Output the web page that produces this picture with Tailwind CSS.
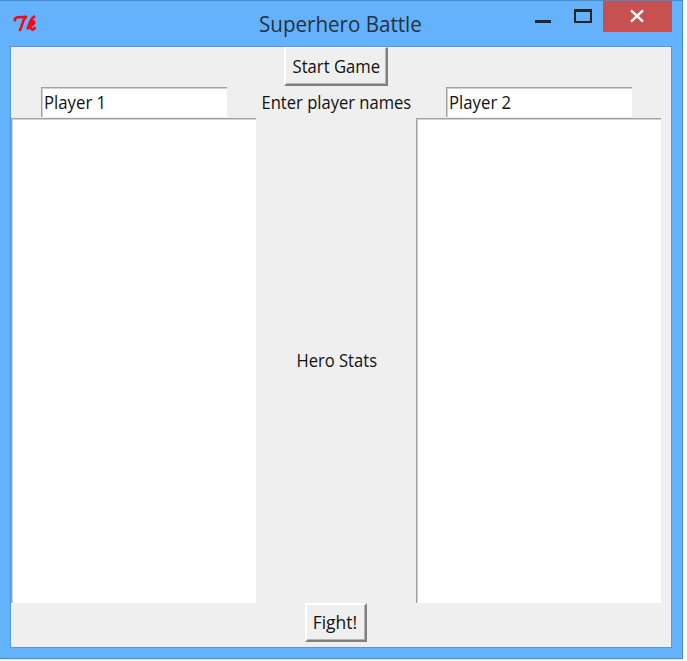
<!DOCTYPE html>
<html lang="en">
<head>
<meta charset="utf-8">
<title>Superhero Battle</title>
<script src="https://cdn.jsdelivr.net/npm/@tailwindcss/browser@4"></script>
</head>
<body class="w-[687px] h-[661px] overflow-hidden bg-white">
<div class="w-[683px] h-[659px] bg-[#64b1fc] border-t border-r border-b border-[#4a8aca] pl-[10px] shadow-[0_1px_2px_#e4e8e8] font-['Open_Sans','Noto_Sans',sans-serif] text-[18px] text-[#111]">
  <header class="flex h-[45px] w-[662px] items-start">
    <svg class="mt-[13px] ml-[3px] h-[20px] w-[24px] shrink-0" viewBox="0 0 24 20" fill="none" stroke="#fa0514" stroke-linejoin="round">
      <path d="M1.8 7.4L2 4.8L4 3.2H7L13 2.8L10.4 6.5L9 11L6.6 17" stroke-width="2.5"/>
      <path d="M22 2L19 4.6L17 8.2L14.4 15.4M15.8 11L18 8.4L20.8 7.4L21.2 9.2L19 11L16.7 11.6L18 14.4L19.6 15.6L21.4 14.8L21.8 12.8" stroke-width="2.6"/>
    </svg>
    <h1 class="mt-[6px] ml-[222px] w-[182px] shrink-0 whitespace-nowrap text-[22px] leading-[32px] font-normal text-[#26323e]"><span class="inline-block origin-left scale-x-[0.935]">Superhero Battle</span></h1>
    <div class="ml-auto flex">
      <svg class="h-[31px] w-[80px]" viewBox="0 0 80 31" shape-rendering="crispEdges"><path d="M12 19h16v3H12z" fill="#262626"/><path fill-rule="evenodd" d="M51 8h18v14H51zM53 11v9h14v-9z" fill="#262626"/></svg>
      <div class="flex h-[31px] w-[69px] bg-[#c75050]"><svg class="mt-[8px] ml-[27px] h-[14px] w-[14px]" viewBox="0 0 14 14" fill="none" stroke="#fff" stroke-width="2.4"><path d="M1 1.3 13 12.7M13 1.3 1 12.7"/></svg></div>
    </div>
  </header>
  <main class="grid h-[602px] w-[662px] grid-cols-[245px_160px_245px] grid-rows-[40px_31px_485px_40px] justify-start border border-[#5298dc] bg-[#efefef] whitespace-nowrap">
    <button class="col-start-2 row-start-1 ml-[28px] flex h-[39px] w-[104px] items-center justify-center border-t border-l-2 border-r-2 border-b-2 border-t-white border-l-white border-r-[#808080] border-b-[#808080] shadow-[inset_-1px_-1px_0_#b4b4b4]"><span class="inline-block scale-x-[0.925]">Start Game</span></button>
    <div class="col-start-1 row-start-2 ml-[30px] flex h-[30px] w-[186px] items-center border-t border-l border-[#a0a0a0] bg-white pl-[2px] shadow-[inset_1px_1px_0_#d2d2d2]"><span class="inline-block origin-left scale-x-[0.93]">Player 1</span></div>
    <div class="col-start-2 row-start-2 flex items-center justify-center"><span class="inline-block scale-x-[0.92]">Enter player names</span></div>
    <div class="col-start-3 row-start-2 ml-[30px] flex h-[30px] w-[186px] items-center border-t border-l border-[#a0a0a0] bg-white pl-[2px] shadow-[inset_1px_1px_0_#d2d2d2]"><span class="inline-block origin-left scale-x-[0.93]">Player 2</span></div>
    <div class="col-start-1 row-start-3 border-t border-l border-[#a0a0a0] bg-white shadow-[inset_1px_1px_0_#d2d2d2]"></div>
    <div class="col-start-2 row-start-3 flex items-center justify-center pl-px"><span class="inline-block scale-x-[0.92]">Hero Stats</span></div>
    <div class="col-start-3 row-start-3 border-t border-l border-[#a0a0a0] bg-white shadow-[inset_1px_1px_0_#d2d2d2]"></div>
    <button class="col-start-2 row-start-4 ml-[49px] flex h-[39px] w-[62px] items-center justify-center border-t-2 border-l-2 border-r-2 border-b-2 border-t-white border-l-white border-r-[#808080] border-b-[#808080] pr-[2px] shadow-[inset_-1px_-1px_0_#b4b4b4]"><span class="inline-block scale-x-[0.97]">Fight!</span></button>
  </main>
</div>
</body>
</html>
